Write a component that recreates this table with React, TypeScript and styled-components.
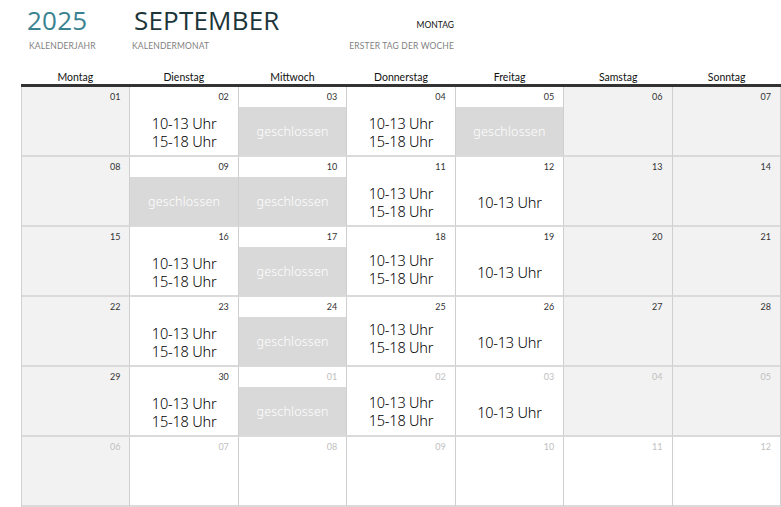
import React from "react";
import styled, { createGlobalStyle } from "styled-components";

const GlobalStyle = createGlobalStyle`
  html, body { margin: 0; padding: 0; background: #ffffff; }
  body { font-family: "Lato", "Open Sans", sans-serif; overflow: hidden; }
`;

const Page = styled.div`
  width: 781px;
  height: 507px;
  padding-top: 5px;
  box-sizing: border-box;
`;

const Header = styled.div`
  display: flex;
  align-items: flex-start;
  height: 66px;
`;

const HeaderBlock = styled.div<{ $width: number; $indent: number; $right?: boolean }>`
  width: ${(p) => p.$width}px;
  padding-left: ${(p) => p.$indent}px;
  box-sizing: border-box;
  display: flex;
  flex-direction: column;
  align-items: ${(p) => (p.$right ? "flex-end" : "flex-start")};
`;

const BigTitle = styled.div<{ $color: string }>`
  font-family: "Open Sans", sans-serif;
  font-size: 26px;
  line-height: 30px;
  height: 30px;
  color: ${(p) => p.$color};
  letter-spacing: 0.2px;
`;

const SmallValue = styled.div`
  font-family: "Lato", sans-serif;
  font-size: 8.5px;
  line-height: 10px;
  margin-top: 15px;
  height: 15px;
  color: #111;
`;

const Caption = styled.div<{ $shift?: number }>`
  font-family: "Lato", sans-serif;
  font-size: 8.5px;
  line-height: 10px;
  margin-top: 6px;
  margin-left: ${(p) => p.$shift ?? 0}px;
  color: #7f7f7f;
  letter-spacing: 0.15px;
`;

const Calendar = styled.div`
  margin-left: 21px;
  width: 760px;
`;

const WeekHeader = styled.div`
  display: grid;
  grid-template-columns: repeat(7, 1fr);
  border-bottom: 3px solid #333333;
  height: 13px;
`;

const DayName = styled.div`
  font-family: "Lato", sans-serif;
  font-size: 10.5px;
  line-height: 12px;
  text-align: center;
  color: #111;
`;

const Grid = styled.div`
  display: grid;
  grid-template-columns: repeat(7, 1fr);
  border-left: 1px solid #d2d2d2;
`;

const Cell = styled.div<{ $shaded: boolean }>`
  height: 70px;
  box-sizing: border-box;
  border-right: 1px solid #cfcfcf;
  border-bottom: 2px solid #dadada;
  background: ${(p) => (p.$shaded ? "#f2f2f2" : "#ffffff")};
  display: flex;
  flex-direction: column;
`;

const DateNum = styled.div<{ $muted: boolean }>`
  height: 20px;
  line-height: 20px;
  padding-right: 9px;
  text-align: right;
  font-family: "Lato", sans-serif;
  font-size: 9px;
  color: ${(p) => (p.$muted ? "#c0c0c0" : "#333333")};
`;

const Content = styled.div<{ $lift: number }>`
  flex: 1;
  display: flex;
  flex-direction: column;
  align-items: center;
  justify-content: center;
  padding-top: 2px;
  padding-bottom: ${(p) => p.$lift * 2}px;
`;

const Hours = styled.div`
  font-family: "Noto Sans", "Open Sans", sans-serif;
  font-weight: 300;
  font-size: 14.5px;
  line-height: 18.5px;
  color: #000;
  letter-spacing: -0.2px;
`;

const Closed = styled.div`
  flex: 1;
  background: #d9d9d9;
  color: #ffffff;
  font-family: "Noto Sans", "Open Sans", sans-serif;
  font-weight: 300;
  font-size: 12.5px;
  display: flex;
  align-items: center;
  justify-content: center;
  letter-spacing: 0.2px;
`;

type Kind = "none" | "two" | "one" | "closed";
type Day = { d: string; kind: Kind; shaded?: boolean; muted?: boolean; lift?: number };

const rows: Day[][] = [
  [
    { d: "01", kind: "none", shaded: true },
    { d: "02", kind: "two" },
    { d: "03", kind: "closed" },
    { d: "04", kind: "two" },
    { d: "05", kind: "closed" },
    { d: "06", kind: "none", shaded: true },
    { d: "07", kind: "none", shaded: true },
  ],
  [
    { d: "08", kind: "none", shaded: true },
    { d: "09", kind: "closed" },
    { d: "10", kind: "closed" },
    { d: "11", kind: "two" },
    { d: "12", kind: "one" },
    { d: "13", kind: "none", shaded: true },
    { d: "14", kind: "none", shaded: true },
  ],
  [
    { d: "15", kind: "none", shaded: true },
    { d: "16", kind: "two" },
    { d: "17", kind: "closed" },
    { d: "18", kind: "two", lift: 3 },
    { d: "19", kind: "one" },
    { d: "20", kind: "none", shaded: true },
    { d: "21", kind: "none", shaded: true },
  ],
  [
    { d: "22", kind: "none", shaded: true },
    { d: "23", kind: "two" },
    { d: "24", kind: "closed" },
    { d: "25", kind: "two", lift: 4 },
    { d: "26", kind: "one" },
    { d: "27", kind: "none", shaded: true },
    { d: "28", kind: "none", shaded: true },
  ],
  [
    { d: "29", kind: "none", shaded: true },
    { d: "30", kind: "two" },
    { d: "01", kind: "closed", muted: true },
    { d: "02", kind: "two", muted: true, lift: 1 },
    { d: "03", kind: "one", muted: true },
    { d: "04", kind: "none", shaded: true, muted: true },
    { d: "05", kind: "none", shaded: true, muted: true },
  ],
  [
    { d: "06", kind: "none", shaded: true, muted: true },
    { d: "07", kind: "none", muted: true },
    { d: "08", kind: "none", muted: true },
    { d: "09", kind: "none", muted: true },
    { d: "10", kind: "none", muted: true },
    { d: "11", kind: "none", muted: true },
    { d: "12", kind: "none", muted: true },
  ],
];

const dayNames = ["Montag", "Dienstag", "Mittwoch", "Donnerstag", "Freitag", "Samstag", "Sonntag"];

function DayCell({ day }: { day: Day }) {
  return (
    <Cell $shaded={!!day.shaded}>
      <DateNum $muted={!!day.muted}>{day.d}</DateNum>
      {day.kind === "closed" ? (
        <Closed>geschlossen</Closed>
      ) : (
        <Content $lift={day.lift ?? 0}>
          {day.kind !== "none" && <Hours>10-13 Uhr</Hours>}
          {day.kind === "two" && <Hours>15-18 Uhr</Hours>}
        </Content>
      )}
    </Cell>
  );
}

export default function App() {
  return (
    <>
      <GlobalStyle />
      <Page>
        <Header>
          <HeaderBlock $width={132} $indent={27}>
            <BigTitle $color="#3a8290">2025</BigTitle>
            <Caption $shift={2}>KALENDERJAHR</Caption>
          </HeaderBlock>
          <HeaderBlock $width={200} $indent={2}>
            <BigTitle $color="#1c3539">SEPTEMBER</BigTitle>
            <Caption $shift={-2}>KALENDERMONAT</Caption>
          </HeaderBlock>
          <HeaderBlock $width={122} $indent={0} $right>
            <SmallValue>MONTAG</SmallValue>
            <Caption>ERSTER TAG DER WOCHE</Caption>
          </HeaderBlock>
        </Header>
        <Calendar>
          <WeekHeader>
            {dayNames.map((n) => (
              <DayName key={n}>{n}</DayName>
            ))}
          </WeekHeader>
          <Grid>
            {rows.flat().map((day, i) => (
              <DayCell key={i} day={day} />
            ))}
          </Grid>
        </Calendar>
      </Page>
    </>
  );
}
